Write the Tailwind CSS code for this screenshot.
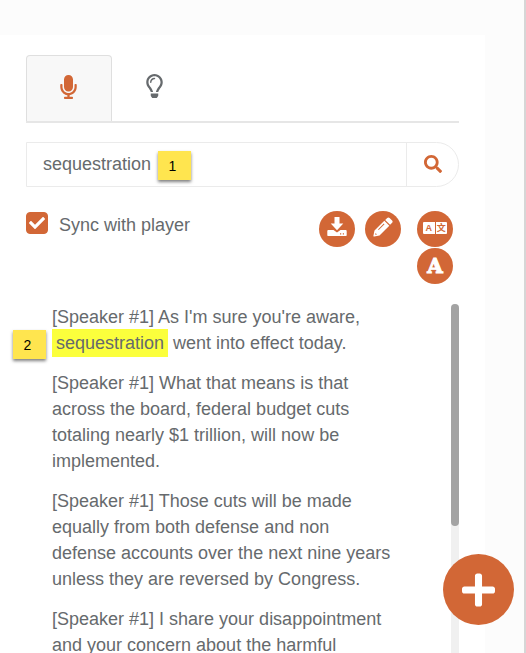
<!DOCTYPE html>
<html lang="en">
<head>
    <meta charset="utf-8">
    <title>Transcript</title>
    <meta name="viewport" content="width=device-width, initial-scale=1.0">
    <script src="https://cdn.jsdelivr.net/npm/@tailwindcss/browser@4"></script>
</head>

<body class="h-screen overflow-hidden bg-[#fcfcfc] border-r-2 border-[#d6d6d6] pt-[35px] pr-[39px] font-['Liberation_Sans',Arial,sans-serif] text-[18px] text-[#666a6d]">
    <main class="flex flex-col h-full bg-white pt-5 px-[26px] overflow-hidden">
        <!-- Tabs -->
        <div role="tablist" class="flex shrink-0 border-b-2 border-[#e6e6e6]">
            <button role="tab" aria-selected="true" aria-label="Transcript" class="w-[86px] h-[66px] flex items-center justify-center bg-[#f8f8f8] border border-b-0 border-[#dfdfdf] rounded-t text-[#d26736]">
                <svg class="h-6 w-[17px] mb-1 mr-0.5" viewBox="0 0 352 512" fill="currentColor">
                    <path d="M176 352c53.02 0 96-42.98 96-96V96c0-53.02-42.98-96-96-96S80 42.98 80 96v160c0 53.02 42.98 96 96 96zm160-160h-16c-8.84 0-16 7.16-16 16v48c0 74.8-64.49 134.82-140.79 127.38C96.71 376.89 48 317.11 48 250.3V208c0-8.84-7.16-16-16-16H16c-8.84 0-16 7.16-16 16v40.16c0 89.64 63.97 169.55 152 181.69V464H96c-8.84 0-16 7.16-16 16v16c0 8.84 7.16 16 16 16h160c8.84 0 16-7.16 16-16v-16c0-8.84-7.16-16-16-16h-56v-33.77C285.71 418.47 352 344.9 352 256v-48c0-8.84-7.16-16-16-16z"/>
                </svg>
            </button>
            <button role="tab" aria-selected="false" aria-label="Insights" class="w-[86px] h-[66px] flex items-center justify-center">
                <svg class="h-6 w-[17px] mb-1 mr-0.5" viewBox="0 0 352 512" fill="currentColor">
                    <path d="M176 80c-52.94 0-96 43.06-96 96 0 8.84 7.16 16 16 16s16-7.16 16-16c0-35.3 28.72-64 64-64 8.84 0 16-7.16 16-16s-7.16-16-16-16zM96.06 459.17c0 3.15.93 6.22 2.68 8.84l24.51 36.84c2.97 4.46 7.97 7.14 13.32 7.14h78.85c5.36 0 10.36-2.68 13.32-7.14l24.51-36.84c1.74-2.62 2.67-5.7 2.68-8.84l.05-43.18H96.02l.04 43.18zM176 0C73.72 0 0 82.97 0 176c0 44.37 16.45 84.85 43.56 115.78 16.64 18.99 42.74 58.8 52.42 92.16v.06h48v-.12c-.01-4.77-.72-9.51-2.15-14.07-5.59-17.81-22.82-64.77-62.17-109.67-20.54-23.43-31.52-53.15-31.61-84.14-.2-73.64 59.67-128 127.95-128 70.58 0 128 57.42 128 128 0 30.97-11.24 60.85-31.65 84.14-39.11 44.61-56.42 91.47-62.1 109.46a47.507 47.507 0 0 0-2.22 14.3v.1h48v-.05c9.68-33.37 35.78-73.18 52.42-92.16C335.55 260.85 352 220.37 352 176 352 78.8 273.2 0 176 0z"/>
                </svg>
            </button>
        </div>

        <!-- Search -->
        <form class="relative flex shrink-0 h-[45px] mt-[19px] border border-[#ebebeb] rounded-r-full">
            <input type="text" aria-label="Search transcript" value="sequestration" class="flex-1 min-w-0 px-4 outline-none">
            <button type="button" aria-label="Search" class="w-[52px] flex items-center justify-center border-l border-[#ebebeb] text-[#d26736]">
                <svg class="size-[18px] mb-0.5" viewBox="0 0 512 512" fill="currentColor">
                    <path d="M505 442.7L405.3 343c-4.5-4.5-10.6-7-17-7H372c27.6-35.3 44-79.7 44-128C416 93.1 322.9 0 208 0S0 93.1 0 208s93.1 208 208 208c48.3 0 92.7-16.4 128-44v16.3c0 6.4 2.5 12.5 7 17l99.7 99.7c9.4 9.4 24.6 9.4 33.9 0l28.3-28.3c9.4-9.4 9.4-24.6.1-34zM208 336c-70.7 0-128-57.2-128-128 0-70.7 57.2-128 128-128 70.7 0 128 57.2 128 128 0 70.7-57.2 128-128 128z"/>
                </svg>
            </button>
            <span class="absolute left-[131px] top-2 w-[33px] h-[29px] pr-1 flex items-center justify-center bg-[#ffe54f] text-sm text-black shadow-[0_2px_3px_rgba(0,0,0,0.5)]">1</span>
        </form>

        <!-- Options -->
        <div class="flex shrink-0 items-start mt-6 pr-[6px]">
            <div class="flex items-start gap-[11px]">
                <span class="grid size-[22px] mt-px">
                    <input type="checkbox" id="sync" checked class="peer col-start-1 row-start-1 appearance-none size-[22px] rounded border border-[#d26736] checked:bg-[#d26736]">
                    <svg class="hidden peer-checked:block col-start-1 row-start-1 place-self-center size-4 text-white pointer-events-none" viewBox="0 0 512 512" fill="currentColor">
                        <path d="M173.898 439.404l-166.4-166.4c-9.997-9.997-9.997-26.206 0-36.204l36.203-36.204c9.997-9.998 26.207-9.998 36.204 0L192 312.69 432.095 72.596c9.997-9.997 26.207-9.997 36.204 0l36.203 36.204c9.997 9.997 9.997 26.206 0 36.204l-294.4 294.401c-9.998 9.997-26.207 9.997-36.204-.001z"/>
                    </svg>
                </span>
                <label for="sync" class="leading-7">Sync with player</label>
            </div>
            <div class="flex gap-[10px] ml-auto">
                <button aria-label="Download" class="size-9 rounded-full bg-[#d26736] text-white flex items-center justify-center">
                    <svg class="size-5 mb-1" viewBox="0 0 20 20" fill="currentColor">
                        <path d="M7.500 0h5v6.500h3.800L10 13.200 3.700 6.500h3.800z"/>
                        <path fill-rule="evenodd" d="M1.200 13h5.300l3.500 2.500 3.500-2.500h5.300c.5 0 .9.400.9.900v4c0 .6-.4 1-.9 1H1.200c-.5 0-.9-.4-.9-1v-4c0-.5.4-.9.900-.9zM13 16.200v1.200h1.200v-1.200zM15.800 16.200v1.200H17v-1.200z"/>
                    </svg>
                </button>
                <button aria-label="Edit" class="size-9 rounded-full bg-[#d26736] text-white flex items-center justify-center">
                    <svg class="size-5 mb-1" viewBox="0 0 20 20" fill="currentColor">
                        <path d="M14.200.900c.7-.7 1.700-.7 2.400 0l2.500 2.500c.7.700.7 1.700 0 2.400l-2 2-4.900-4.900z"/>
                        <path fill-rule="evenodd" d="M11.300 3.700l5 5L6.500 18.500l-5.200 1.100c-.6.100-1-.3-.9-.9L1.500 13.500zM10.800 6.600L5 12.400l.7.700 5.800-5.800zM2.600 16l-.4 1.800 1.800-.4z"/>
                    </svg>
                </button>
                <div class="flex flex-col gap-px ml-[6px]">
                    <button aria-label="Translate" class="size-9 rounded-full bg-[#d26736] text-white flex items-center justify-center">
                        <span class="flex w-6 h-3 mb-0.5 gap-px text-[9px] leading-3 font-bold text-[#d26736]">
                            <span class="flex-1 bg-white rounded-l-[1px]">A</span>
                            <span class="flex-1 bg-white rounded-r-[1px] font-['Noto_Sans_CJK_SC',sans-serif]">文</span>
                        </span>
                    </button>
                    <button aria-label="Font size" class="size-9 rounded-full bg-[#d26736] text-white font-['DejaVu_Serif',serif] font-bold text-[20px] leading-9 [-webkit-text-stroke:1px_white]">A</button>
                </div>
            </div>
        </div>

        <!-- Transcript -->
        <div class="flex flex-1 min-h-0 mt-5">
            <div class="flex-1 pl-[26px] pr-[54px] leading-[26px] space-y-[14px]">
                <p class="relative">
                    <span class="absolute -left-[39px] top-[26px] w-[33px] h-[29px] pr-1 flex items-center justify-center bg-[#ffe54f] text-sm text-black shadow-[0_2px_3px_rgba(0,0,0,0.5)]">2</span>
                    [Speaker #1] As I'm sure you're aware, <mark class="bg-[#fbff3c] text-inherit px-1 py-1">sequestration</mark> went into effect today.
                </p>
                <p>[Speaker #1] What that means is that across the board, federal budget cuts totaling nearly $1 trillion, will now be implemented.</p>
                <p>[Speaker #1] Those cuts will be made equally from both defense and non defense accounts over the next nine years unless they are reversed by Congress.</p>
                <p>[Speaker #1] I share your disappointment and your concern about the harmful</p>
            </div>
            <!-- Scrollbar -->
            <div class="w-2 shrink-0 h-full bg-[#f0f0f0] rounded-t-full">
                <div class="h-[222px] bg-[#a3a3a3] rounded-full"></div>
            </div>
        </div>
    </main>

    <button aria-label="Add" class="fixed right-3 bottom-7 size-[71px] rounded-full bg-[#d26736] text-white flex items-center justify-center">
        <svg class="h-[38px] w-[33px]" viewBox="0 0 448 512" fill="currentColor">
            <path d="M416 208H272V64c0-17.67-14.33-32-32-32h-32c-17.67 0-32 14.33-32 32v144H32c-17.67 0-32 14.33-32 32v32c0 17.67 14.33 32 32 32h144v144c0 17.67 14.33 32 32 32h32c17.67 0 32-14.33 32-32V304h144c17.67 0 32-14.33 32-32v-32c0-17.67-14.33-32-32-32z"/>
        </svg>
    </button>
</body>
</html>
